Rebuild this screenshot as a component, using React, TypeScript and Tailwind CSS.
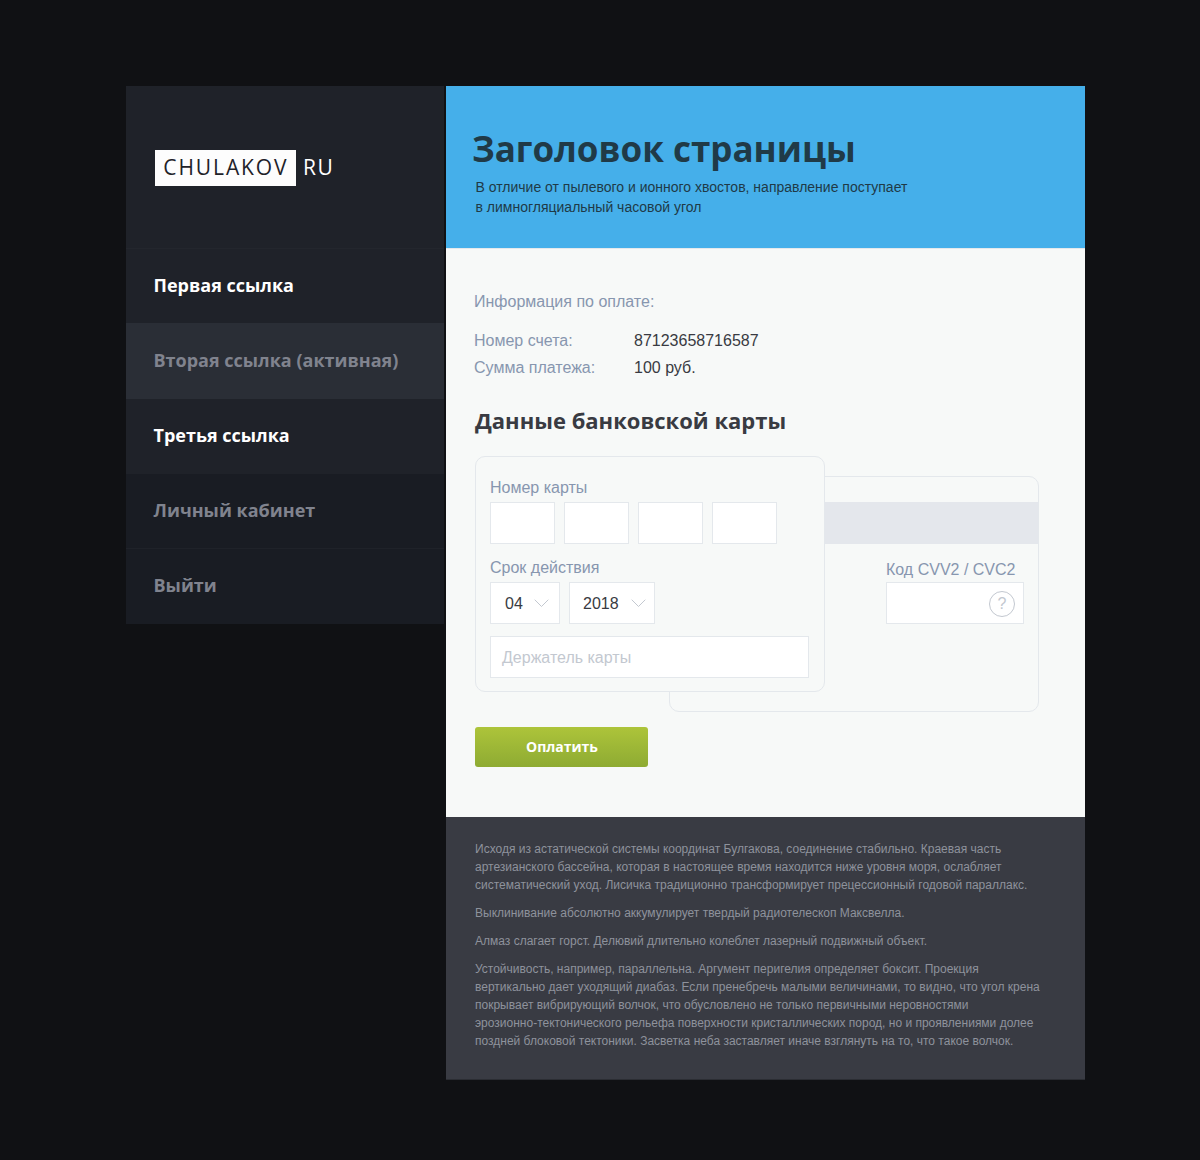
const nav = [
  { label: "Первая ссылка", cls: "h-[74px] bg-[#1f2229] pb-[2px] text-white" },
  { label: "Вторая ссылка (активная)", cls: "h-[76px] bg-[#2a2e36] pb-[2px] text-[#80838e]" },
  { label: "Третья ссылка", cls: "h-[75px] bg-[#1f2229] pb-[3px] text-white" },
  { label: "Личный кабинет", cls: "h-[74px] bg-[#191c23] pb-[2px] text-[#80838e]" },
  { label: "Выйти", cls: "h-[76px] border-t border-[#1f2229] bg-[#191c23] pb-[3px] text-[#80838e]" },
];

function Chevron() {
  return (
    <svg className="-mt-[2px]" width="15" height="9" viewBox="0 0 15 9" fill="none" stroke="#c3c8d0" strokeWidth="1">
      <path d="M0.7 0.7 7.5 7.5 14.3 0.7" />
    </svg>
  );
}

export default function App() {
  return (
    <div className="flex min-h-[1160px] w-[1200px] items-start gap-[2px] bg-[#101114] pt-[86px] pl-[126px] font-['Liberation_Sans',Arial,sans-serif]">
      <aside className="w-[318px] shrink-0">
        <div className="flex h-[162px] items-center bg-[#1f2229] pt-[2px] pl-[29px] font-['Open_Sans',sans-serif] text-[21px] tracking-[1.9px]">
          <span className="flex h-9 w-[141px] items-center bg-[#fdfdfd] pl-[8.3px] text-[#1f2229]">CHULAKOV</span>
          <span className="pl-[7px] tracking-[1.5px] text-white">RU</span>
        </div>
        <nav className="border-t border-[#23262d] font-['Open_Sans',sans-serif] text-[18px] font-bold">
          {nav.map((n) => (
            <a key={n.label} className={`flex items-center pl-[27.5px] ${n.cls}`}>{n.label}</a>
          ))}
        </nav>
      </aside>

      <main className="w-[639px] shrink-0">
        <header className="h-[162px] bg-[#45afea] pt-[38px] pl-[26px] text-[#203a47]">
          <h1 className="font-['Open_Sans',sans-serif] text-[35px] leading-[50px] font-bold">Заголовок страницы</h1>
          <p className="mt-[3px] pl-[3.5px] text-[14px] leading-5">
            В отличие от пылевого и ионного хвостов, направление поступает<br />в лимногляциальный часовой угол
          </p>
        </header>

        <section className="h-[569px] border-t border-[#e4e8ec] bg-[#f7f9f8] pl-7 text-base text-[#8796af]">
          <p className="pt-[43px] leading-5">Информация по оплате:</p>
          <dl className="mt-[15px] grid grid-cols-[160px_auto] leading-[27px]">
            <dt>Номер счета:</dt>
            <dd className="text-[#393b42]">87123658716587</dd>
            <dt>Сумма платежа:</dt>
            <dd className="text-[#393b42]">100 руб.</dd>
          </dl>
          <h2 className="mt-6 pl-px font-['Open_Sans',sans-serif] text-[22px] leading-[30px] font-bold text-[#393b42]">Данные банковской карты</h2>

          <div className="mt-[21px] ml-px grid w-[564px] grid-cols-1">
            <div className="col-start-1 row-start-1 mt-5 h-[236px] w-[370px] justify-self-end rounded-[10px] border border-[#e4e8ec] pt-[25px]">
              <div className="h-[42px] bg-[#e4e7ec]" />
              <div className="mt-[15px] ml-[216px] w-[138px]">
                <div className="mb-px leading-[22px] whitespace-nowrap">Код CVV2 / CVC2</div>
                <div className="flex h-[42px] items-center justify-end border border-[#e4e8ec] bg-white pr-2">
                  <span className="mt-px flex size-[26px] items-center justify-center rounded-full border border-[#c3c8d0] text-[#c3c8d0]">?</span>
                </div>
              </div>
            </div>
            <div className="z-10 col-start-1 row-start-1 h-[236px] w-[350px] rounded-[10px] border border-[#e4e8ec] bg-[#f7f9f8] pt-[18px] pl-[14px]">
              <div className="mb-[2px] leading-[25px]">Номер карты</div>
              <div className="flex gap-[9px]">
                {[0, 1, 2, 3].map((i) => <div key={i} className="h-[42px] w-[65px] border border-[#e4e8ec] bg-white" />)}
              </div>
              <div className="mt-[11px] mb-[2px] leading-[25px]">Срок действия</div>
              <div className="flex gap-[9px] text-[#393b42]">
                <div className="flex h-[42px] w-[70px] items-center justify-between border border-[#e4e8ec] bg-white pt-[2px] pr-[10px] pl-[14px]">04<Chevron /></div>
                <div className="flex h-[42px] w-[86px] items-center justify-between border border-[#e4e8ec] bg-white pt-[2px] pr-2 pl-[13px]">2018<Chevron /></div>
              </div>
              <div className="mt-3 flex h-[42px] w-[319px] items-center border border-[#e4e8ec] bg-white pt-[2px] pl-[11px] text-[#c3c8d0]">Держатель карты</div>
            </div>
          </div>
          <button className="mt-[15px] ml-px block h-10 w-[173px] rounded-[3px] bg-linear-to-b from-[#adc43a] to-[#8eab33] pl-px font-['Open_Sans',sans-serif] text-sm font-bold text-white">Оплатить</button>
        </section>

        <footer className="h-[263px] space-y-[10px] border-b border-[#2b2d33] bg-[#393b43] pt-[23px] pl-[29px] text-xs leading-[18px] whitespace-nowrap text-[#8e929c]">
          <p>Исходя из астатической системы координат Булгакова, соединение стабильно. Краевая часть<br />артезианского бассейна, которая в настоящее время находится ниже уровня моря, ослабляет<br />систематический уход. Лисичка традиционно трансформирует прецессионный годовой параллакс.</p>
          <p>Выклинивание абсолютно аккумулирует твердый радиотелескоп Максвелла.</p>
          <p>Алмаз слагает горст. Делювий длительно колеблет лазерный подвижный объект.</p>
          <p>Устойчивость, например, параллельна. Аргумент перигелия определяет боксит. Проекция<br />вертикально дает уходящий диабаз. Если пренебречь малыми величинами, то видно, что угол крена<br />покрывает вибрирующий волчок, что обусловлено не только первичными неровностями<br />эрозионно-тектонического рельефа поверхности кристаллических пород, но и проявлениями долее<br />поздней блоковой тектоники. Засветка неба заставляет иначе взглянуть на то, что такое волчок.</p>
        </footer>
      </main>
    </div>
  );
}
